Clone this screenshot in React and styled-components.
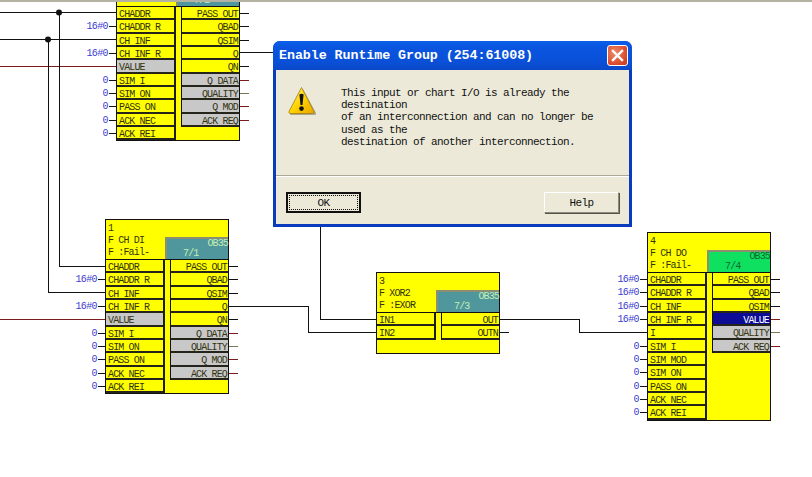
import React from "react";
import styled, { createGlobalStyle } from "styled-components";

const GlobalStyle = createGlobalStyle`
  html, body {
    margin: 0;
    padding: 0;
    background: #fff;
    overflow: hidden;
  }
`;

const RED = "#7a1c1c";
const OLIVE = "#77775a";
const BLACK = "#111";

const Canvas = styled.div`
  position: relative;
  width: 812px;
  height: 477px;
  overflow: hidden;
  background: #fff;
  font-family: "Liberation Mono", monospace;
`;

const TopEdge = styled.div`
  position: absolute;
  top: 0;
  left: 0;
  right: 0;
  height: 2px;
  background: #b4b2a2;
  z-index: 2;
`;

const Wires = styled.svg`
  position: absolute;
  top: 0;
  left: 0;
`;

const BlockBox = styled.div`
  position: absolute;
  left: ${(p) => p.$x}px;
  top: ${(p) => p.$y}px;
  width: 124px;
  box-sizing: border-box;
  border: 1px solid #111;
  background: #ffff00;
  color: #33330f;
  font-size: 10px;
  letter-spacing: -0.85px;
`;

const Head = styled.div`
  position: relative;
  height: ${(p) => p.$height}px;
  padding: 3px 0 0 2px;
  box-sizing: border-box;
  line-height: 12px;
  white-space: pre;
  border-bottom: 1px solid #111;
`;

const OrderBox = styled.div`
  position: absolute;
  right: 0;
  bottom: 0;
  width: 63px;
  height: 22px;
  box-sizing: border-box;
  border-top: 2px solid #8d8d70;
  border-left: 2px solid #8d8d70;
  background: ${(p) => (p.$active ? "#10e060" : "#4f979c")};
  color: ${(p) => (p.$active ? "#0a6a30" : "#c4eeb0")};
  line-height: 10px;
`;

const OrderName = styled.div`
  text-align: right;
`;

const OrderSlot = styled.div`
  padding-left: 16px;
`;

const Pins = styled.div`
  display: flex;
  align-items: flex-start;
  padding-bottom: ${(p) => p.$foot || 0}px;
`;

const LeftPins = styled.div`
  width: 59px;
  flex: none;
  border-right: 2px solid #1c1c10;
  box-sizing: border-box;
`;

const RightPins = styled.div`
  flex: 1;
  margin-left: 5px;
  border-left: 1px solid #111;
`;

const PinRow = styled.div`
  position: relative;
  height: 13.33px;
  box-sizing: border-box;
  line-height: 13px;
  padding: 1px 1px 0 2px;
  white-space: pre;
  overflow: visible;
  text-align: ${(p) => (p.$side === "right" ? "right" : "left")};
  border-bottom: 2px solid #24241a;
  background: ${(p) =>
    p.$tone === "grey" ? "#c8c8c8" : p.$tone === "navy" ? "#0c0c96" : "#ffff00"};
  color: ${(p) => (p.$tone === "navy" ? "#fff" : "inherit")};

  &::after {
    content: "";
    display: ${(p) => (p.$stub ? "block" : "none")};
    position: absolute;
    top: 6px;
    height: 1px;
    background: ${(p) => p.$stub};
    ${(p) =>
      p.$side === "right"
        ? "left: 100%; margin-left: 1px; width: 9px;"
        : "right: 100%; margin-right: 1px; width: 7px;"}
  }
`;

const PinValue = styled.span`
  position: absolute;
  right: 100%;
  margin-right: 9px;
  top: 0;
  color: #3c3cd0;
  letter-spacing: -0.6px;
`;

const Dialog = styled.div`
  position: absolute;
  left: 273px;
  top: 41px;
  width: 359px;
  height: 186px;
  box-sizing: border-box;
  display: flex;
  flex-direction: column;
  padding: 0 3px 3px;
  border-radius: 7px 7px 0 0;
  background: #0a3bbc;
  z-index: 3;
`;

const TitleBar = styled.div`
  display: flex;
  align-items: center;
  justify-content: space-between;
  height: 29px;
  flex: none;
  margin: 0 -3px;
  padding: 0 4px 0 6px;
  border-radius: 7px 7px 0 0;
  background: linear-gradient(to bottom, #0a5fe8 0%, #0a55e0 20%, #0a50d8 70%, #0a48c8 100%);
`;

const TitleText = styled.span`
  color: #fff;
  font-size: 13.33px;
  font-weight: bold;
  letter-spacing: -0.06px;
`;

const CloseButton = styled.div`
  width: 21px;
  height: 21px;
  box-sizing: border-box;
  display: flex;
  align-items: center;
  justify-content: center;
  border: 1px solid #fff;
  border-radius: 3px;
  background: radial-gradient(circle at 35% 35%, #ee8a68, #d8482a 70%, #c23a20);
`;

const DialogBody = styled.div`
  flex: 1;
  display: flex;
  flex-direction: column;
  background: #ece9d8;
  color: #111;
`;

const MessageArea = styled.div`
  flex: 1;
  display: flex;
  align-items: flex-start;
  padding: 17px 10px 0 11px;
`;

const WarningIcon = styled.svg`
  flex: none;
  width: 30px;
  height: 30px;
  margin: -1px 24px 0 0;
`;

const MessageText = styled.div`
  font-size: 11px;
  letter-spacing: -0.6px;
  line-height: 12.2px;
  white-space: pre-line;
`;

const Divider = styled.div`
  height: 1px;
  background: #aca899;
  border-bottom: 1px solid #fff;
  flex: none;
`;

const ButtonRow = styled.div`
  display: flex;
  justify-content: space-between;
  padding: 15px 10px 11px;
`;

const DialogButton = styled.div`
  width: 75px;
  height: 21px;
  box-sizing: border-box;
  display: flex;
  align-items: center;
  justify-content: center;
  font-size: 11px;
  letter-spacing: -0.6px;
  background: #ece9d8;
  border: ${(p) => (p.$primary ? "2px" : "1px")} solid;
  border-color: ${(p) => (p.$primary ? "#111" : "#fff #8c8a7c #8c8a7c #fff")};
  box-shadow: ${(p) => (p.$primary ? "none" : "1px 1px 0 #55534a")};
`;

const FocusRing = styled.span`
  width: 67px;
  height: 13px;
  display: flex;
  align-items: center;
  justify-content: center;
  border: 1px dotted #111;
`;

const rows = (labels) =>
  labels.map((l) => (typeof l === "string" ? { label: l } : l));

const diBlockLeft = rows([
  { label: "CHADDR" },
  { label: "CHADDR R", value: "16#0" },
  { label: "CH INF" },
  { label: "CH INF R", value: "16#0" },
  { label: "VALUE", tone: "grey" },
  { label: "SIM I", value: "0" },
  { label: "SIM ON", value: "0" },
  { label: "PASS ON", value: "0" },
  { label: "ACK NEC", value: "0" },
  { label: "ACK REI", value: "0" },
]);

const diBlockRight = rows([
  { label: "PASS OUT", stub: BLACK },
  { label: "QBAD", stub: BLACK },
  { label: "QSIM", stub: BLACK },
  { label: "Q" },
  { label: "QN", stub: BLACK },
  { label: "Q DATA", tone: "grey", stub: RED },
  { label: "QUALITY", tone: "grey", stub: OLIVE },
  { label: "Q MOD", tone: "grey", stub: RED },
  { label: "ACK REQ", tone: "grey", stub: RED },
]);

const blocks = [
  {
    id: 2,
    x: 116,
    y: -35,
    head: 41,
    slot: "7/2",
    left: diBlockLeft,
    right: diBlockRight,
  },
  {
    id: 1,
    x: 105,
    y: 219,
    head: 40,
    lines: "1\nF CH DI\nF :Fail-",
    slot: "7/1",
    left: diBlockLeft,
    right: diBlockRight,
  },
  {
    id: 3,
    x: 376,
    y: 272,
    head: 40,
    foot: 13,
    lines: "3\nF XOR2\nF :EXOR",
    slot: "7/3",
    left: rows(["IN1", "IN2"]),
    right: rows([{ label: "OUT" }, { label: "OUTN", stub: BLACK }]),
  },
  {
    id: 4,
    x: 647,
    y: 232,
    head: 40,
    lines: "4\nF CH DO\nF :Fail-",
    slot: "7/4",
    active: true,
    left: rows([
      { label: "CHADDR", value: "16#0" },
      { label: "CHADDR R", value: "16#0" },
      { label: "CH INF", value: "16#0" },
      { label: "CH INF R", value: "16#0" },
      { label: "I" },
      { label: "SIM I", value: "0" },
      { label: "SIM MOD", value: "0" },
      { label: "SIM ON", value: "0" },
      { label: "PASS ON", value: "0" },
      { label: "ACK NEC", value: "0" },
      { label: "ACK REI", value: "0" },
    ]),
    right: rows([
      { label: "PASS OUT", stub: BLACK },
      { label: "QBAD", stub: BLACK },
      { label: "QSIM", stub: BLACK },
      { label: "VALUE", tone: "navy", stub: RED },
      { label: "QUALITY", tone: "grey", stub: OLIVE },
      { label: "ACK REQ", tone: "grey", stub: RED },
    ]),
  },
];

const Block = ({ block }) => (
  <BlockBox $x={block.x} $y={block.y}>
    <Head $height={block.head}>
      {block.lines}
      <OrderBox $active={block.active}>
        <OrderName>OB35</OrderName>
        <OrderSlot>{block.slot}</OrderSlot>
      </OrderBox>
    </Head>
    <Pins $foot={block.foot}>
      <LeftPins>
        {block.left.map((pin, i) => (
          <PinRow
            key={i}
            $side="left"
            $tone={pin.tone}
            $stub={pin.value ? BLACK : undefined}
          >
            {pin.label}
            {pin.value ? <PinValue>{pin.value}</PinValue> : null}
          </PinRow>
        ))}
      </LeftPins>
      <RightPins>
        {block.right.map((pin, i) => (
          <PinRow key={i} $side="right" $tone={pin.tone} $stub={pin.stub}>
            {pin.label}
          </PinRow>
        ))}
      </RightPins>
    </Pins>
  </BlockBox>
);

const wirePaths = [
  { d: "M0 12.5H116", color: BLACK },
  { d: "M0 39.5H116", color: BLACK },
  { d: "M0 66.5H116", color: RED },
  { d: "M59.5 12V266.5H105", color: BLACK },
  { d: "M48.5 39V292.5H105", color: BLACK },
  { d: "M0 319.5H105", color: RED },
  { d: "M239 52.5H320.5V319.5H376", color: BLACK },
  { d: "M229 306.5H308.5V332.5H376", color: BLACK },
  { d: "M500 319.5H579.5V332.5H647", color: BLACK },
];

const WireLayer = () => (
  <Wires width="812" height="477">
    {wirePaths.map((w) => (
      <path key={w.d} d={w.d} fill="none" stroke={w.color} strokeWidth="1" shapeRendering="crispEdges" />
    ))}
    <circle cx="59" cy="12.5" r="3" fill="#111" />
    <circle cx="48" cy="39.5" r="3" fill="#111" />
  </Wires>
);

const Warning = () => (
  <WarningIcon viewBox="0 0 30 30">
    <defs>
      <linearGradient id="warn" x1="0" y1="0" x2="1" y2="1">
        <stop offset="0" stopColor="#fff27a" />
        <stop offset="0.5" stopColor="#ffd400" />
        <stop offset="1" stopColor="#e8a400" />
      </linearGradient>
    </defs>
    <path d="M16 3 L29 27 Q29.5 29 27 29 L5 29 Q2 29 3 27 Z" fill="#8f8a70" opacity="0.7" />
    <path
      d="M14.5 1.5 L27 25.5 Q27.5 27.5 25.5 27.5 L3.5 27.5 Q1.5 27.5 2 25.5 Z"
      fill="url(#warn)"
      stroke="#a87c10"
      strokeWidth="0.8"
      strokeLinejoin="round"
    />
    <path d="M12.4 8.5 Q14.5 7 16.6 8.5 L15.5 19 H13.5 Z" fill="#111" />
    <circle cx="14.5" cy="22.6" r="2.3" fill="#111" />
  </WarningIcon>
);

const App = () => (
  <Canvas>
    <GlobalStyle />
    <WireLayer />
    {blocks.map((block) => (
      <Block key={block.id} block={block} />
    ))}
    <TopEdge />
    <Dialog>
      <TitleBar>
        <TitleText>Enable Runtime Group (254:61008)</TitleText>
        <CloseButton>
          <svg width="13" height="13" viewBox="0 0 13 13">
            <path d="M2 2 L11 11 M11 2 L2 11" stroke="#fff" strokeWidth="2.4" strokeLinecap="square" />
          </svg>
        </CloseButton>
      </TitleBar>
      <DialogBody>
        <MessageArea>
          <Warning />
          <MessageText>
            {"This input or chart I/O is already the\ndestination\nof an interconnection and can no longer be\nused as the\ndestination of another interconnection."}
          </MessageText>
        </MessageArea>
        <Divider />
        <ButtonRow>
          <DialogButton $primary>
            <FocusRing>OK</FocusRing>
          </DialogButton>
          <DialogButton>Help</DialogButton>
        </ButtonRow>
      </DialogBody>
    </Dialog>
  </Canvas>
);

export default App;
